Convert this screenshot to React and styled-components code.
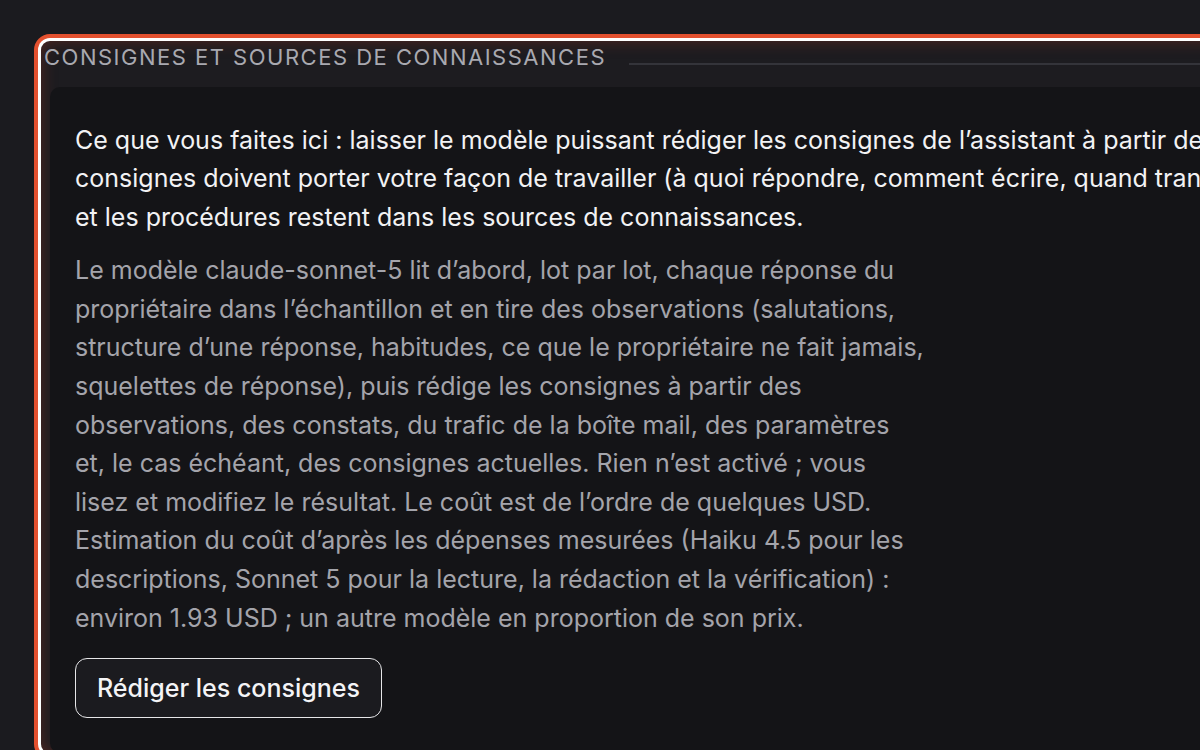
import React from "react";
import styled, { createGlobalStyle } from "styled-components";

const GlobalStyle = createGlobalStyle`
  html, body {
    margin: 0;
    padding: 0;
    background: #1b1b1f;
    overflow: hidden;
    font-family: Inter, "Noto Sans", "Liberation Sans", sans-serif;
  }
`;

const Page = styled.div`
  width: 1200px;
  height: 750px;
  padding: 41px 0 0 41px;
  box-sizing: border-box;
  overflow: hidden;
`;

const Section = styled.section`
  width: 1480px;
  height: 712px;
  border-radius: 9px;
  background: #1d1c20;
  box-shadow: 0 0 0 3px #ffffff, 0 0 0 7px #e4512f,
    inset 0 0 16px rgba(190, 60, 35, 0.35);
  display: flex;
  flex-direction: column;
`;

const LegendRow = styled.div`
  display: flex;
  align-items: center;
  gap: 23px;
  padding: 3px 0 0 3px;
`;

const LegendText = styled.h2`
  margin: 0;
  font-size: 22px;
  line-height: 27px;
  font-weight: 400;
  letter-spacing: 1.5px;
  text-transform: uppercase;
  color: #a9a9b0;
  white-space: nowrap;
`;

const LegendLine = styled.div`
  flex: 1;
  height: 2px;
  margin-top: 12px;
  background: #34343a;
`;

const Card = styled.div`
  margin: 16px 0 0 9px;
  flex: 1;
  background: #141417;
  border-radius: 10px;
  padding: 34px 25px;
  box-sizing: border-box;
`;

const Lead = styled.p`
  margin: 0;
  width: 1400px;
  font-size: 25px;
  line-height: 38.4px;
  color: #f2f2f4;
`;

const Details = styled.p`
  margin: 15px 0 0;
  width: 850px;
  font-size: 25px;
  line-height: 38.6px;
  color: #a4a4ab;
`;

const Button = styled.button`
  margin-top: 21px;
  height: 60px;
  padding: 0 21px;
  border: 1.5px solid #e6e6e8;
  border-radius: 12px;
  background: #1b1b1f;
  color: #f4f4f6;
  font-family: inherit;
  font-size: 25px;
  font-weight: 500;
  cursor: pointer;
`;

export default function App() {
  return (
    <Page>
      <GlobalStyle />
      <Section>
        <LegendRow>
          <LegendText>Consignes et sources de connaissances</LegendText>
          <LegendLine />
        </LegendRow>
        <Card>
          <Lead>
            Ce que vous faites ici{"\u00a0"}: laisser le modèle puissant
            rédiger les consignes de l’assistant à partir de vos échanges. Les
            consignes doivent porter votre façon de travailler (à quoi
            répondre, comment écrire, quand transmettre){"\u00a0"}; les faits
            <br />
            et les procédures restent dans les sources de connaissances.
          </Lead>
          <Details>
            Le modèle claude-sonnet-5 lit d’abord, lot par lot, chaque réponse
            du propriétaire dans l’échantillon et en tire des observations
            (salutations, structure d’une réponse, habitudes, ce que le
            propriétaire ne fait jamais, squelettes de réponse), puis rédige
            les consignes à partir des observations, des constats, du trafic de
            la boîte mail, des paramètres et, le cas échéant, des consignes
            actuelles. Rien n’est activé{"\u00a0"}; vous lisez et modifiez le
            résultat. Le coût est de l’ordre de quelques USD. Estimation du
            coût d’après les dépenses mesurées (Haiku 4.5 pour les
            descriptions, Sonnet 5 pour la lecture, la rédaction et la
            vérification){"\u00a0"}: environ 1.93 USD{"\u00a0"}; un autre
            modèle en proportion de son prix.
          </Details>
          <Button>Rédiger les consignes</Button>
        </Card>
      </Section>
    </Page>
  );
}
